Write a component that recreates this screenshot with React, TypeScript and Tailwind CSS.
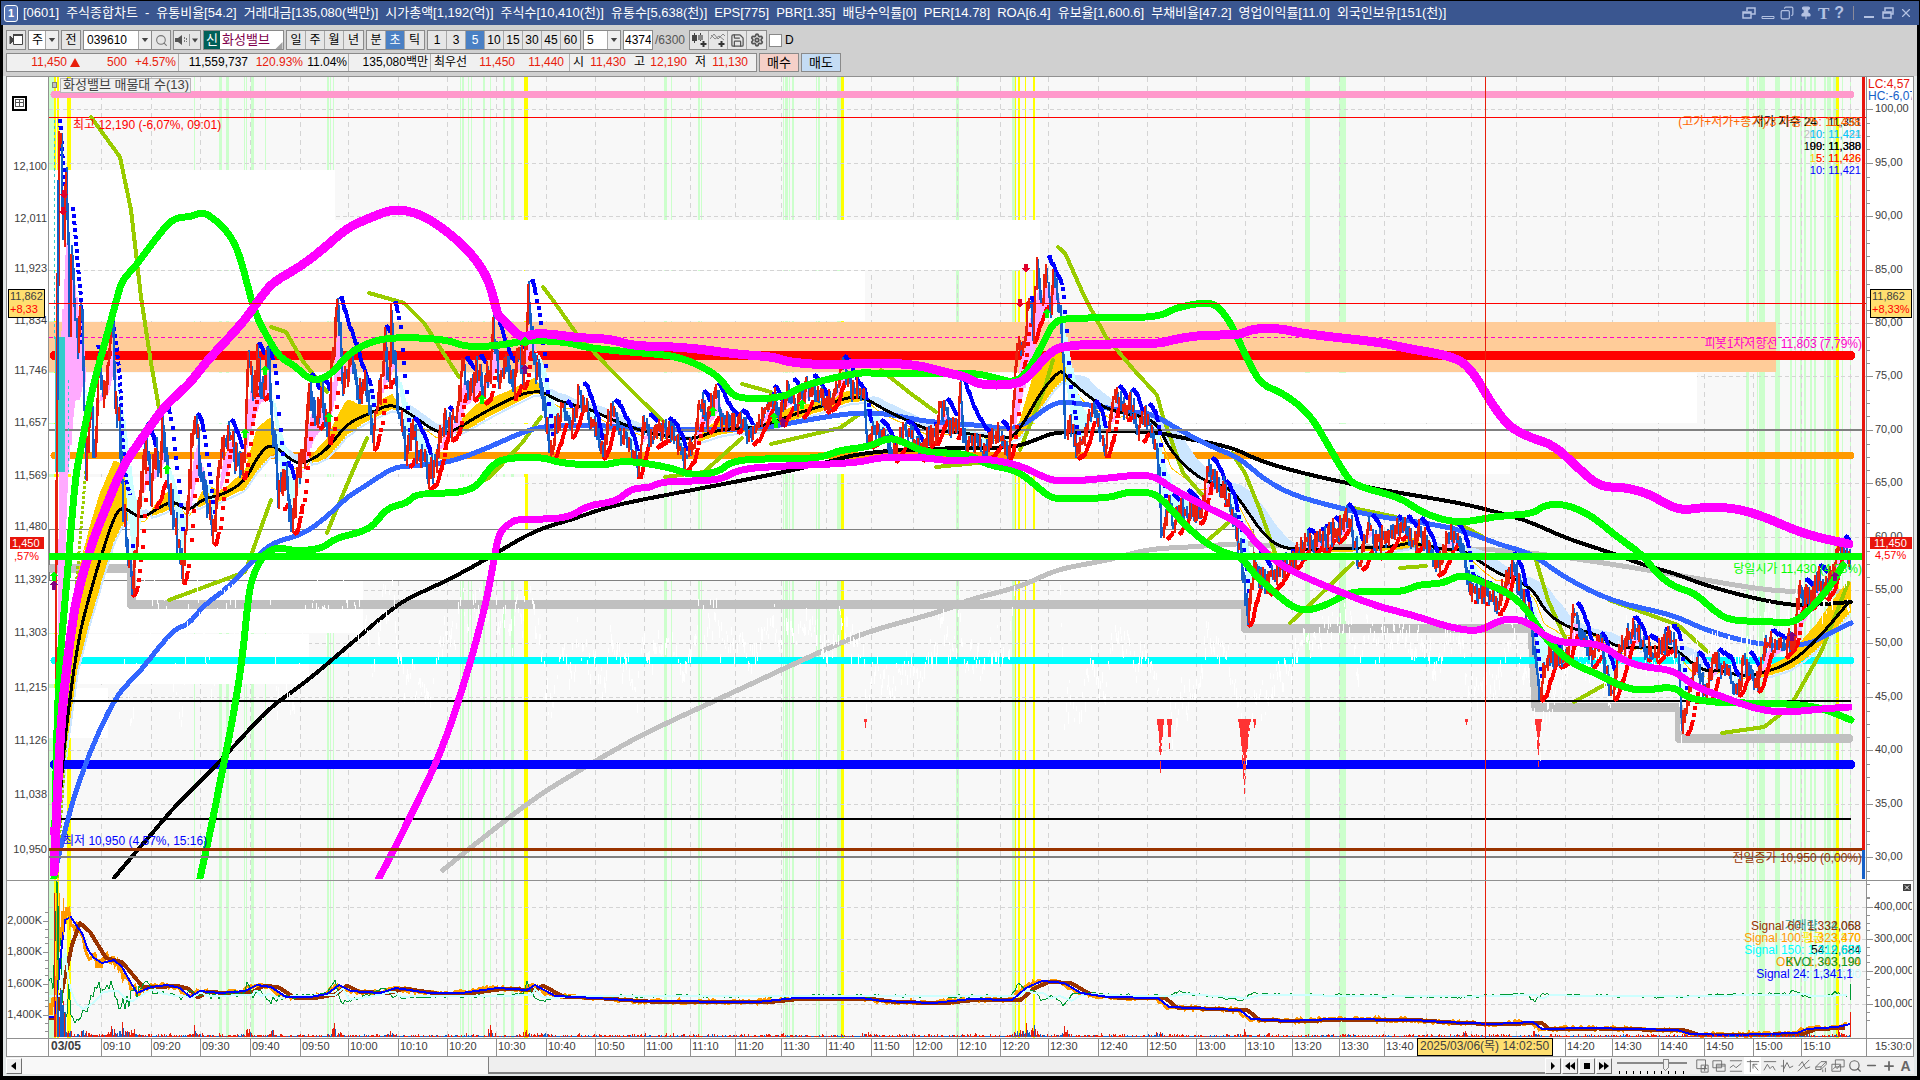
import React from "react";
import { Search, Save, Settings, Pin, Minus, Plus, X, Copy } from "lucide-react";

type Pt = [number, number];

const FONT = "font-['Liberation_Sans','Noto_Sans_CJK_KR',sans-serif]";

const parse = (s: string): Pt[] => s.trim().split(/\s+/).map((p) => p.split(",").map(Number) as Pt);

const toPath = (pts: Pt[]) => pts.map((p, i) => `${i ? "L" : "M"}${p[0]} ${Math.round(p[1] * 10) / 10}`).join("");

const smooth = (pts: Pt[]) => {
  let d = `M${pts[0][0]} ${pts[0][1]}`;
  for (let i = 1; i < pts.length - 1; i++) {
    d += `Q${pts[i][0]} ${pts[i][1]} ${(pts[i][0] + pts[i + 1][0]) / 2} ${(pts[i][1] + pts[i + 1][1]) / 2}`;
  }
  const l = pts[pts.length - 1];
  return d + `L${l[0]} ${l[1]}`;
};

const at = (pts: Pt[], x: number) => {
  if (x <= pts[0][0]) return pts[0][1];
  for (let i = 1; i < pts.length; i++) {
    if (x <= pts[i][0]) {
      const [x0, y0] = pts[i - 1];
      const [x1, y1] = pts[i];
      return y0 + ((y1 - y0) * (x - x0)) / (x1 - x0 || 1);
    }
  }
  return pts[pts.length - 1][1];
};

const random = (seed: number) => () => {
  seed = (seed * 1664525 + 1013904223) % 4294967296;
  return seed / 4294967296;
};

const bandUpper = parse(`54,872 56,830 57,800 60,740 64,690 70,640 76,600 84,570 93,540 105,510 122,467 143,437 163,408 180,392 190,383 206,362 224,343 245,320 261,297 273,282 300,267 322,250 347,228 367,219 390,210 404,210 422,215 441,227 461,243 478,262 490,283 498,317 502,318 514,332 524,338 535,333 559,335 580,338 612,339 632,346 685,347 734,354 775,357 787,362 824,365 842,365 857,363 885,363 918,365 947,373 967,377 979,385 1014,385 1028,378 1045,357 1063,344 1159,344 1171,340 1200,335 1240,335 1249,330 1266,328 1283,329 1305,334 1379,342 1405,348 1457,357 1474,373 1491,403 1509,427 1531,438 1554,445 1578,468 1600,487 1622,487 1648,493 1678,511 1704,507 1734,508 1760,515 1799,532 1825,539 1849,544`);
const bandLower = parse(`379,878 394,850 412,813 433,770 449,730 461,693 473,653 486,603 494,560 499,532 510,523 518,519 567,519 588,505 616,502 632,488 649,488 663,481 720,481 738,469 783,466 857,463 881,457 922,457 955,462 983,458 1020,465 1045,478 1061,482 1110,478 1134,475 1155,476 1171,488 1208,508 1228,517 1245,528 1257,545 1283,567 1318,583 1348,595 1379,607 1413,615 1448,627 1478,632 1496,622 1511,618 1530,623 1543,635 1561,643 1600,643 1622,660 1643,667 1674,670 1695,687 1726,698 1752,708 1782,713 1821,709 1849,707`);
const greenUpper = parse(`54,878 56,760 59,667 67,580 75,480 80,453 92,390 102,353 116,302 122,280 135,267 151,245 169,222 180,217 190,217 202,212 212,217 229,233 239,253 247,283 255,313 267,337 280,358 294,365 312,382 331,375 347,355 367,343 392,337 445,339 465,347 498,346 527,340 567,342 588,348 640,353 669,355 693,362 720,377 730,393 742,399 783,398 800,387 824,380 861,372 881,374 934,374 975,373 996,378 1014,383 1028,372 1045,340 1053,323 1065,318 1110,318 1159,317 1175,308 1200,303 1214,303 1228,318 1240,343 1251,367 1262,385 1283,393 1309,413 1327,443 1344,473 1355,486 1400,497 1422,513 1457,524 1496,516 1533,514 1544,505 1565,504 1591,515 1617,537 1643,555 1656,573 1674,587 1695,593 1713,610 1730,621 1765,621 1791,624 1808,612 1830,587 1843,565`);
const greenLower = parse(`200,878 208,843 222,773 235,707 243,653 249,590 255,570 265,553 278,547 294,551 322,549 335,538 371,530 386,508 408,503 416,493 473,493 490,467 504,458 543,457 559,463 602,466 625,460 673,468 689,475 718,473 734,459 796,459 824,457 840,450 869,447 889,437 906,443 926,453 967,453 987,465 1016,470 1032,482 1049,497 1061,499 1110,498 1126,492 1151,492 1163,500 1183,523 1204,542 1224,553 1242,557 1253,573 1275,593 1292,607 1307,611 1327,605 1353,590 1400,593 1420,584 1442,584 1461,574 1483,582 1513,595 1531,615 1544,637 1570,663 1600,675 1622,687 1643,691 1674,686 1687,698 1717,703 1773,703 1817,706 1851,720`);
const blackLong = parse(`114,878 135,853 155,830 176,805 204,778 237,743 269,708 306,682 347,647 388,612 408,598 449,580 490,557 535,530 571,520 604,508 640,500 698,489 775,474 824,463 865,452 947,448 1012,448 1036,440 1057,431 1151,431 1183,438 1232,447 1257,460 1301,473 1370,488 1413,495 1465,504 1500,513 1531,522 1565,538 1609,552 1643,565 1674,573 1704,585 1752,598 1795,606 1825,604 1851,602`);
const blueMa = parse(`57,863 69,813 82,773 98,733 118,693 139,673 159,647 176,628 188,625 204,605 229,587 253,560 273,542 302,535 327,517 347,497 367,485 392,468 408,466 449,463 490,447 527,430 555,425 600,425 640,430 681,430 759,429 796,422 849,413 885,413 926,422 979,425 1012,430 1028,422 1053,403 1069,402 1102,407 1130,412 1151,413 1179,430 1212,447 1240,458 1262,478 1292,495 1335,507 1379,517 1426,523 1465,531 1500,545 1531,553 1565,578 1613,602 1674,615 1700,628 1739,640 1773,646 1808,645 1830,633 1851,623`);
const grayLong = parse(`443,870 490,832 539,795 580,770 630,741 673,720 734,692 796,663 840,643 873,630 947,610 967,600 1020,587 1049,573 1069,567 1110,560 1147,549 1191,547 1245,543 1266,546 1474,548 1544,554 1630,567 1700,579 1752,588 1791,592 1849,591`);
const midMa = parse(`56,868 61,780 67,720 78,640 90,593 102,553 114,517 122,506 135,515 143,518 155,510 173,500 188,512 204,498 220,496 245,482 257,457 271,442 294,463 306,463 327,450 347,423 371,413 392,403 412,415 437,433 453,432 482,413 535,387 559,402 588,408 612,420 644,432 691,441 718,429 759,428 791,415 832,403 849,397 865,398 885,410 906,420 930,431 967,433 1008,440 1020,430 1040,393 1057,373 1063,371 1069,380 1089,397 1110,411 1147,417 1159,427 1171,452 1200,480 1228,487 1240,500 1262,533 1279,547 1301,550 1392,547 1413,542 1444,550 1461,548 1496,573 1518,580 1535,592 1544,610 1565,627 1600,635 1617,648 1648,647 1674,647 1691,663 1708,672 1721,670 1739,676 1760,674 1791,663 1817,640 1849,602`);
const olive = [
  `91,117 120,157 131,210 141,297 151,363 159,408`, `169,600 245,572 271,500`, `271,327 286,332 302,360 327,392`,
  `327,533 335,513 349,480 367,438`, `369,293 404,303 424,323 459,377`, `465,490 490,477 522,443 541,417`,
  `543,287 555,303 576,333 608,367 640,399 665,423`, `665,477 704,472 742,438`, `742,384 771,392`,
  `771,444 840,428 861,413`, `881,370 910,393 936,412`, `936,467 987,462`, `1020,450 1045,387 1053,360`,
  `1058,247 1065,253 1085,298 1106,337 1134,370 1157,395 1163,417 1183,473 1204,497`, `1208,540 1228,523`,
  `1232,453 1245,473 1260,510 1275,553`, `1290,623 1318,597 1353,563`, `1353,508 1396,517`, `1400,568 1426,566`,
  `1426,513 1465,527 1483,537`, `1535,557 1548,600 1565,638`, `1574,702 1604,685`, `1609,600 1678,625 1708,652`,
  `1722,733 1764,727 1790,707 1822,650 1848,583`,
].map((s) => toPath(parse(s)));

const priceKeys = parse(`54,860 55,620 57,150 60,135 62,250 64,175 67,215 68,360 70,240 73,300 77,350 80,300 83,420 85,470 90,395 94,465 98,355 102,405 106,375 111,320 114,400 118,430 122,500 126,550 131,592 135,540 140,480 146,440 150,500 155,440 158,480 161,415 166,475 172,515 177,540 181,575 186,510 190,445 195,425 200,475 206,500 212,530 216,480 222,450 228,435 235,460 242,465 247,350 252,400 256,355 262,405 266,345 272,440 278,495 284,470 291,525 298,470 304,455 308,380 315,425 320,395 327,425 332,345 336,305 342,385 350,355 357,395 364,380 372,435 380,380 384,340 388,385 390,315 396,400 405,455 412,430 418,460 424,455 428,478 434,460 445,415 452,428 462,368 470,395 475,365 482,390 490,365 492,325 498,388 505,355 512,385 518,352 522,370 527,295 532,350 540,390 548,448 558,420 562,405 570,428 577,395 585,410 594,430 602,450 610,408 618,430 627,442 638,470 642,422 650,438 660,430 672,432 682,460 692,445 700,398 705,420 715,392 720,422 730,420 740,420 749,438 758,425 765,402 774,400 778,418 786,388 795,408 805,388 815,395 830,400 838,378 842,362 850,390 862,392 865,420 866,452 872,425 880,430 892,455 900,432 908,435 920,448 930,432 937,430 938,400 948,425 956,425 959,385 963,448 975,442 983,448 995,432 1008,450 1012,400 1016,345 1022,352 1028,295 1032,330 1036,252 1040,305 1045,270 1050,310 1052,275 1058,308 1062,360 1064,438 1070,425 1075,450 1085,430 1092,403 1104,450 1113,390 1122,410 1130,400 1136,430 1144,412 1152,438 1158,470 1160,535 1168,505 1172,522 1180,502 1188,515 1200,515 1206,465 1218,485 1228,500 1232,510 1240,560 1247,622 1253,565 1264,585 1275,573 1288,562 1301,548 1311,542 1331,535 1348,518 1357,562 1368,525 1374,543 1390,535 1405,524 1413,545 1420,532 1435,568 1448,533 1461,547 1468,590 1483,593 1496,606 1511,565 1522,600 1530,620 1535,667 1539,697 1544,660 1561,655 1567,658 1572,605 1583,643 1591,655 1598,635 1611,698 1617,650 1632,626 1643,645 1656,655 1667,635 1676,647 1681,728 1689,687 1695,655 1704,698 1713,658 1726,673 1737,688 1743,665 1756,682 1765,640 1778,650 1793,637 1797,595 1812,593 1817,575 1823,595 1834,563 1838,540 1845,547 1849,567`);

interface Candle { x: number; c: number; hi: number; lo: number; up: boolean }

const candles: Candle[] = (() => {
  const r = random(11);
  const out: Candle[] = [];
  let prev = 860;
  for (let x = 54; x <= 1850; x += 1.2) {
    const wild = x < 330 ? 16 : x < 560 ? 14 : x > 1160 ? 11 : 10;
    const c = at(priceKeys, x) + (r() - 0.5) * wild * 1.3;
    out.push({ x: Math.round(x) + 0.5, c, hi: Math.min(c, prev) - r() * wild * 0.8, lo: Math.max(c, prev) + r() * wild * 0.8, up: c < prev });
    prev = c;
  }
  return out;
})();

const bars = (up: boolean) => candles.filter((k) => k.up === up).map((k) => `M${k.x} ${k.hi.toFixed(0)}V${k.lo.toFixed(0)}`).join("");

const sar = (() => {
  let falling = false;
  let s = 860;
  let ep = 860;
  let af = 0.03;
  let above = "";
  let below = "";
  let last = s;
  candles.forEach((k) => {
    s += af * (ep - s);
    let flip = false;
    if (falling) {
      if (k.lo > ep) { ep = k.lo; af = Math.min(0.24, af + 0.02); }
      if (k.hi < s) { falling = false; s = ep; ep = k.hi; af = 0.03; flip = true; }
    } else {
      if (k.hi < ep) { ep = k.hi; af = Math.min(0.24, af + 0.02); }
      if (k.lo > s) { falling = true; s = ep; ep = k.lo; af = 0.03; flip = true; }
    }
    const near = !flip && Math.abs(s - last) < 6;
    const dot = near ? `M${k.x - 1} ${last.toFixed(0)}L${k.x} ${s.toFixed(0)}` : `M${k.x} ${s.toFixed(0)}h0.1`;
    last = s;
    if (k.x < 132) return;
    if (falling) above += dot; else below += dot;
  });
  return { above, below };
})();

const openingTrails = [`60,119 63,163 66,190`, `73,207 75,230 78,267 81,297 82,347`, `98,345 101,358`, `112,313 116,343 120,377 122,433 126,480 130,495`].map((s) => toPath(parse(s)));

const ribbon = (() => {
  let f = candles[0].c;
  let s = candles[0].c;
  let up = "";
  let down = "";
  candles.forEach((k) => {
    f += (k.c - f) * 0.24;
    s += (k.c - s) * 0.08;
    const seg = `M${k.x} ${f.toFixed(0)}V${s.toFixed(0)}`;
    if (f < s) up += seg; else down += seg;
  });
  return { up, down };
})();

const cloud = (() => {
  let gold = "";
  let blue = "";
  const edge: Pt[] = [];
  const pale: Pt[] = [];
  for (let x = 60; x <= 1850; x += 2) {
    const m = at(midMa, x);
    const avg = (at(midMa, x - 24) + at(midMa, x - 12)) / 2;
    const d = Math.max(x < 130 ? -66 : -48, Math.min(x < 1000 ? 8 : 30, m - avg));
    if (d < 0) {
      gold += `M${x} ${(m + d).toFixed(0)}V${(m - d * 0.4 + 3).toFixed(0)}`;
      pale.push([x, m - d * 0.4 + 5]);
      edge.push([x, m + d]);
    } else {
      blue += `M${x} ${(m - d).toFixed(0)}V${m.toFixed(0)}`;
      edge.push([x, m + d * 0.5 + 1]);
      pale.push([x, m - d]);
    }
  }
  return { gold, blue, edge: toPath(edge), pale: toPath(pale) };
})();

const ghost = (() => {
  const r = random(5);
  let d = "";
  candles.forEach((k) => {
    if (k.x < 95 || r() < 0.1) return;
    const y = 646 + (k.c - at(midMa, k.x)) * 1.1 + (r() - 0.5) * 26;
    if (y > 578 && y < 754) d += `M${k.x} ${y.toFixed(0)}v${(3 + r() * 10).toFixed(0)}`;
  });
  return d;
})();

const drips = (() => {
  const r = random(9);
  let d = "";
  const cone = (cx: number, w: number, depth: number) => {
    for (let x = -w; x <= w; x++) {
      const h = depth * Math.pow(1 - Math.abs(x) / (w + 1), 1.7);
      for (let y = 719; y < 719 + h; y += 3) if (y < 719 + h * 0.6 || r() > 0.3) d += `M${cx + x + 0.5} ${y}v3`;
    }
  };
  cone(1160, 3, 54); cone(1169, 2, 30); cone(1244, 6, 76); cone(1254, 1, 14); cone(1538, 3, 48); cone(865, 1, 8); cone(1466, 1, 4);
  return d;
})();

const obv = parse(`49,1017 55,1017 61,953 65,920 71,917 76,925 82,933 88,950 94,958 102,963 114,960 122,967 131,983 137,993 151,987 167,985 180,988 190,997 200,991 220,993 245,991 257,985 271,987 286,997 310,997 327,994 339,985 351,991 380,993 396,988 429,993 461,993 498,988 527,990 535,985 555,996 596,998 640,1001 757,1002 796,998 861,998 883,1001 933,1003 971,999 1012,1000 1026,988 1042,981 1064,983 1081,993 1108,997 1158,998 1169,1007 1240,1010 1251,1019 1289,1021 1333,1019 1415,1020 1443,1022 1493,1024 1533,1022 1542,1029 1590,1028 1677,1030 1690,1034 1733,1035 1797,1033 1807,1029 1837,1027 1850,1024`);
const obvSlow: Pt[] = [...parse(`49,1018 56,1018 60,1000 65,977 72,945 80,923 90,932 106,958 122,962 143,987`), ...obv.filter((p) => p[0] > 145 && p[0] < 1838).map(([x, y]): Pt => [x + 8, y + 0.5])];
const kvo = parse(`49,996 53,996 57,900 60,960 63,985 68,1010 75,1022 82,1014 88,1005 95,988 110,985 117,1000 124,1007 131,998 139,988 147,982 152,990 165,995 185,998 193,989 200,997 245,993 248,982 252,996 262,992 272,1001 285,996 327,994 335,980 341,1003 360,998 386,987 392,997 490,996 524,994 527,982 534,998 545,1001 556,997 640,996 1012,996 1018,984 1026,990 1036,990 1041,1001 1052,996 1064,1006 1072,995 1082,992 1110,995 1155,995 1162,997 1170,994 1180,992 1200,995 1240,1000 1246,997 1252,994 1390,996 1463,997 1528,994 1534,1002 1542,994 1560,995 1680,997 1720,995 1785,994 1796,991 1803,996 1820,997 1835,993 1848,997`);
const osc = (() => {
  const r = random(21);
  const green: Pt[] = [];
  const pale: Pt[] = [];
  const orange: Pt[] = [];
  for (let x = 49; x < 1849; x += 2) {
    const a = x < 70 ? 60 : x < 140 ? 16 : x < 300 ? 7 : 3;
    green.push([x, at(kvo, x) + (r() - 0.5) * a]);
    pale.push([x, x < 56 ? 996 : at(kvo, x - 8) * 0.5 + 498]);
    orange.push([x, at(obv, x + 3) + (r() - 0.5) * (x < 70 ? 44 : x < 140 ? 14 : 4)]);
  }
  return { green: toPath(green), pale: toPath(pale), orange: toPath(orange) };
})();

const volume = (() => {
  const r = random(31);
  const peaks = [[56, 120], [64, 45], [84, 14], [112, 15], [122, 18], [132, 12], [194, 11], [247, 13], [272, 8], [334, 14], [388, 10], [490, 11], [525, 12], [544, 8], [783, 5], [865, 6], [1018, 13], [1026, 12], [1034, 18], [1064, 10], [1158, 9], [1244, 6], [1348, 4], [1464, 5], [1534, 7], [1797, 3], [1838, 7]];
  let red = "";
  let blue = "";
  for (let x = 54; x < 1850; x += 1) {
    const h = 1 + Math.round(r() * r() * 3 + peaks.reduce((s, [px, ph]) => s + ph * r() * Math.exp(-Math.abs(x - px) / 3), 0));
    if (r() > 0.45) red += `M${x + 0.5} 1037v-${h}`; else blue += `M${x + 0.5} 1037v-${Math.max(1, Math.round(h * 0.7))}`;
  }
  return { red: red + "M1850.5 1037v-25", blue };
})();

const greenBands = [[49, 5], [194, 1], [219, 3], [226, 3], [244, 1], [246, 1], [251, 3], [265, 1], [327, 2], [330, 1], [333, 1], [460, 1], [462, 2], [468, 1], [471, 1], [483, 2], [490, 1], [503, 2], [511, 3], [664, 3], [671, 1], [698, 2], [701, 1], [783, 1], [785, 3], [789, 1], [792, 2], [816, 1], [818, 2], [837, 4], [956, 3], [1012, 3], [1305, 5], [1339, 7], [1746, 3], [1757, 1], [1759, 6], [1775, 5], [1790, 2], [1795, 1], [1800, 2], [1804, 2], [1810, 2], [1814, 2], [1824, 2], [1827, 4], [1833, 3], [1842, 1], [1850, 1]];
const yellowBands = [[54, 2], [57, 2], [67, 4], [524, 3], [527, 1], [841, 3], [1015, 1], [1018, 2], [1025, 1], [1033, 2], [1836, 3]];
const profile = [[170, 335], [220, 1040], [271, 865], [373, 1697], [424, 1510], [477, 525], [581, 363], [634, 309], [688, 108]];
const gridX = [101, 151, 200, 250, 300, 348, 398, 447, 496, 546, 595, 644, 690, 735, 781, 826, 871, 913, 957, 1000, 1048, 1098, 1147, 1196, 1245, 1292, 1339, 1384, 1426, 1471, 1516, 1565, 1612, 1658, 1704, 1753, 1801];
const gridY = [109, 163, 216, 270, 323, 376, 430, 483, 537, 590, 643, 697, 750, 804, 857];
const leftLabels: [string, number][] = [["12,100", 166], ["12,011", 218], ["11,923", 268], ["11,834", 320], ["11,746", 370], ["11,657", 422], ["11,569", 475], ["11,480", 526], ["11,392", 579], ["11,303", 632], ["11,215", 687], ["11,126", 740], ["11,038", 794], ["10,950", 849], ["2,000K", 920], ["1,800K", 951], ["1,600K", 983], ["1,400K", 1014]];
const subGrid: [string, number][] = [["400,000", 907], ["300,000", 939], ["200,000", 971], ["100,000", 1004]];
const greenArrows = [[265, 370], [329, 417], [245, 433], [167, 469], [482, 399], [525, 341], [713, 411], [774, 417], [776, 423], [802, 404], [1047, 313], [54, 576]];
const purpleArrows = [[525, 369], [783, 422], [54, 585], [1835, 576], [1792, 636]];
const redArrows = [[64, 194], [63, 211], [1026, 268], [1020, 303]];

function T({ x, y, c = "#404040", end, size = 11, bold, children }: { x: number; y: number; c?: string; end?: boolean; size?: number; bold?: boolean; children: React.ReactNode }) {
  return (
    <text x={x} y={y + 4} fill={c} fontSize={size} fontWeight={bold ? 700 : 400} textAnchor={end ? "end" : "start"}>
      {children}
    </text>
  );
}

function Rail({ y, c, w, from = 54, to = 1851, round }: { y: number; c: string; w: number; from?: number; to?: number; round?: boolean }) {
  return <path d={`M${from} ${y}H${to}`} stroke={c} strokeWidth={w} strokeLinecap={round ? "round" : "butt"} fill="none" />;
}

function Curve({ pts, c, w }: { pts: Pt[]; c: string; w: number }) {
  return <path d={smooth(pts)} stroke={c} strokeWidth={w} fill="none" strokeLinecap="round" strokeLinejoin="round" />;
}

function Chart() {
  return (
    <svg viewBox="6 76 1908 981" className={`block h-auto w-full bg-white ${FONT}`} shapeRendering="crispEdges" role="img" aria-label="화성밸브 차트">
      <defs>
        <clipPath id="plot"><rect x="49" y="78" width="1817" height="801" /></clipPath>
        <clipPath id="sub"><rect x="49" y="881" width="1817" height="157" /></clipPath>
        <clipPath id="right"><rect x="1867" y="77" width="45" height="980" /></clipPath>
      </defs>
      <rect x="49" y="77" width="1817" height="961" fill="#f8f8f8" />
      {greenBands.map(([x, w]) => <rect key={x} x={x} y={77} width={w} height={961} fill="#ccffcc" />)}
      {yellowBands.map(([x, w]) => <rect key={x} x={x} y={77} width={w} height={961} fill="#ffff00" />)}
      <g stroke="#d4d4d4" strokeDasharray="5 4">
        {gridX.map((x) => <path key={x} d={`M${x + 0.5} 77V1038`} />)}
        {gridY.map((y) => <path key={y} d={`M49 ${y + 0.5}H1866`} strokeDasharray="4 3" />)}
        {subGrid.map(([, y]) => <path key={y} d={`M49 ${y + 0.5}H1866`} strokeDasharray="4 3" />)}
        <path d="M1850.5 77V1038" />
      </g>

      <g clipPath="url(#plot)" fill="none">
        {profile.map(([y, to]) => <rect key={y} x={49} y={y} width={to - 49} height={y === 477 || y === 581 ? 52 : 50} fill="#fff" />)}
        <rect x="49.5" y="529.5" width="1204" height="51" fill="#fff" stroke="#808080" />
        <rect x="49" y="322" width="1727" height="50" fill="#ffcc99" />
        <Rail y={94.5} c="#ff99cc" w={7} round />
        <Rail y={117.5} c="#ff0000" w={1} from={49} to={1866} />
        <path d="M49 337.5H1862" stroke="#ff00cc" strokeDasharray="4 3" />
        <path d="M52 568.5H131V604.5H1245V628.5H1532L1536 707.5H1679V738.5H1849" stroke="#c0c0c0" strokeWidth="9" strokeLinejoin="round" strokeLinecap="round" />
        <Rail y={355.5} c="#ff0000" w={9} round />
        <Rail y={455.5} c="#ff9900" w={7} round />
        <Rail y={660.5} c="#00ffff" w={7} round />
        <Curve pts={grayLong} c="#c0c0c0" w={5} />
        <path d="M60 560L64 480L68 360L72 320L78 330L84 380L80 400L74 400L68 470L64 600Z" fill="#ffaaff" />
        <path d={cloud.blue} stroke="#cce6ff" strokeWidth="2" />
        <path d={cloud.gold} stroke="#ffcc00" strokeWidth="2" />
        <path d={cloud.edge} stroke="#ffcc00" strokeWidth="1" />
        <path d={cloud.pale} stroke="#cce6ff" strokeWidth="2" />
        <path d={ribbon.up} stroke="#ffaaff" strokeWidth="2" />
        <path d={ribbon.down} stroke="#ccffff" strokeWidth="2" />
        {olive.map((d) => <path key={d} d={d} stroke="#99cc00" strokeWidth="4" strokeLinecap="round" strokeLinejoin="round" />)}
        <path d="M57 878L62 800L72 640L80 540L85 480L89 440" stroke="#99cc00" strokeWidth="3" strokeDasharray="3 2" />
        <Rail y={764.5} c="#0000ff" w={9} round />
        <Rail y={819} c="#000" w={2} />
        <Curve pts={blackLong} c="#000" w={4} />
        <Curve pts={blueMa} c="#3366ff" w={5} />
        <path d={ghost} stroke="#fff" />
        <Rail y={701} c="#000" w={2} />
        <path d={drips} stroke="#ff3333" />
        <Rail y={430} c="#808080" w={2} from={49} to={1862} />
        <Curve pts={midMa} c="#000" w={3} />
        <rect x="55" y="337" width="10" height="135" fill="#33cccc" />
        <path d="M54.5 120V340M68.5 380V472" stroke="#33cccc" strokeDasharray="3 3" />
        <path d={sar.below} stroke="#ff0000" strokeWidth="4" strokeLinecap="square" />
        <path d={sar.above} stroke="#0000ff" strokeWidth="4" strokeLinecap="square" />
        {openingTrails.map((d) => <path key={d} d={d} stroke="#0000ff" strokeWidth="4" strokeDasharray="4 3" />)}
        <path d={bars(false)} stroke="#1560c8" strokeWidth="2" />
        <path d={bars(true)} stroke="#e8200c" strokeWidth="2" />
        <path d="M55.5 480V878" stroke="#e8200c" strokeWidth="2" />
        <path d="M57.5 180V400" stroke="#1560c8" strokeWidth="2" />
        <Curve pts={greenUpper} c="#00ff00" w={7} />
        <Curve pts={greenLower} c="#00ff00" w={7} />
        <Curve pts={bandUpper} c="#ff00ff" w={9} />
        <Curve pts={bandLower} c="#ff00ff" w={7} />
        <Rail y={556.5} c="#00ff00" w={7} from={49} to={1862} />
        <Rail y={849.5} c="#993300" w={3} from={49} to={1862} />
        <Rail y={857} c="#808080" w={2} from={49} to={1862} />
        <rect x="50" y="827" width="6" height="8" fill="#ff00ff" />
        <rect x="50" y="868" width="6" height="8" fill="#ff00ff" />
        {greenArrows.map(([x, y]) => <path key={`${x}-${y}`} d={`M${x} ${y - 5}l4 5h-2v5h-4v-5h-2z`} fill="#00ff00" />)}
        {purpleArrows.map(([x, y]) => <path key={`${x}-${y}`} d={`M${x} ${y - 5}l4 5h-2v5h-4v-5h-2z`} fill="#800080" />)}
        {redArrows.map(([x, y]) => <path key={`${x}-${y}`} d={`M${x} ${y + 5}l4 -5h-2v-4h-4v4h-2z`} fill="#e0002a" />)}
        <path d="M49 303.5H1866" stroke="#ff0000" />
      </g>

      <g clipPath="url(#sub)" fill="none">
        <path d={osc.orange} stroke="#ff9900" strokeWidth="3" />
        <path d={toPath(obvSlow)} stroke="#993300" strokeWidth="4" strokeLinejoin="round" />
        <path d={osc.green} stroke="#009933" />
        <path d={osc.pale} stroke="#ccffff" strokeWidth="2" />
        <path d={toPath(obv)} stroke="#0000ff" strokeWidth="2" />
        <path d={volume.red} stroke="#e8200c" />
        <path d={volume.blue} stroke="#1560c8" />
        <path d="M56.5 893V1037M59.5 893V940M63.5 898V935M69.5 906V930" stroke="#ff9900" />
        <path d="M54.5 893V1037" stroke="#e8200c" />
        <path d="M57.5 893V960M58.5 910V990" stroke="#009933" />
        <path d="M60.5 990V1037M62.5 1005V1037M57.5 1010V1037" stroke="#1560c8" strokeWidth="2" />
        <path d="M1850.5 984V1000" stroke="#009933" />
      </g>

      <path d="M1485.5 77V1038" stroke="#e8200c" />
      <g stroke="#909090" fill="none">
        <path d="M6.5 77V1057M6 76.5H1914M1913.5 77V1057M48.5 77V1056M1866.5 77V1056" />
        <path d="M6 880.5H1913M6 1038.5H1913M6 1056.5H1913" />
        {gridX.map((x) => <path key={x} d={`M${x + 0.5} 1039V1056`} />)}
        {gridY.map((y) => <path key={y} d={`M1867 ${y + 0.5}h6M1867 ${y + 14.5}h3M1867 ${y + 27.5}h3M1867 ${y + 40.5}h3`} />)}
        {subGrid.map(([, y]) => <path key={y} d={`M1867 ${y + 0.5}h6M1867 ${y - 8.5}h3M1867 ${y + 8.5}h3M1867 ${y + 16.5}h3`} />)}
        {leftLabels.slice(14).map(([, y]) => <path key={y} d={`M48 ${y + 1.5}h-5M48 ${y - 7.5}h-3M48 ${y + 9.5}h-3M48 ${y + 17.5}h-3`} />)}
      </g>
      <rect x="1862" y="77" width="3" height="773" fill="#e8150c" />
      <rect x="1862" y="850" width="3" height="29" fill="#1560c8" />

      {leftLabels.map(([t, y]) => <T key={t} x={t.endsWith("K") ? 42 : 47} y={y} end>{t}</T>)}
      <g clipPath="url(#right)">
        {gridY.map((y, i) => <T key={y} x={1875} y={y - 1}>{`${100 - i * 5},00`}</T>)}
        {subGrid.map(([t, y]) => <T key={t} x={1874} y={y - 1}>{t}</T>)}
        <T x={1868} y={84} c="#e8150c" size={12}>LC:4,57</T>
        <T x={1868} y={96} c="#1560c8" size={12}>HC:-6,07</T>
        <T x={1875} y={1046}>15:30:00</T>
      </g>
      <T x={51} y={1046} size={12} bold>03/05</T>
      {gridX.map((x, i) => {
        const m = 10 + i * 10;
        const label = `${String(9 + Math.floor(m / 60)).padStart(2, "0")}:${String(m % 60).padStart(2, "0")}`;
        return x > 1420 && x < 1560 ? null : <T key={x} x={x + 2} y={1046}>{label}</T>;
      })}
      <rect x="1417.5" y="1038.5" width="135" height="17" fill="#ffdf70" stroke="#000" />
      <T x={1420} y={1046} size={12}>2025/03/06(목) 14:02:50</T>

      <rect x="60.5" y="78.5" width="130" height="14" fill="#f0f0f0" stroke="#b8b8b8" />
      <rect x="52.5" y="82.5" width="4" height="5" fill="#c0c0c0" stroke="#808080" />
      <T x={63} y={85} size={13}>화성밸브 매물대 수(13)</T>
      <T x={73} y={125} c="#ff0000" size={12}>최고 12,190 (-6,07%, 09:01)</T>
      <T x={63} y={841} c="#0000ff" size={12}>최저 10,950 (4,57%, 15:16)</T>
      <T x={1862} y={344} c="#ff00cc" size={12} end>피봇1차저항선 11,803 (7,79%)</T>
      <T x={1862} y={569} c="#00ff00" size={12} end>당일시가 11,430 (4,38%)</T>
      <T x={1862} y={858} c="#993300" size={12} end>전일종가 10,950 (0,00%)</T>

      <T x={1817} y={122} c="#000" size={12} end>저가 지수 24</T>
      <T x={1861} y={122} c="#000" end>11,351</T>
      <T x={1861} y={122} c="#ff6600" size={12} end>(고가+저가+종가)/3 가중 25: 11,438</T>
      <T x={1861} y={134} c="#c0c0c0" end>200: 11,434</T>
      <T x={1861} y={134} c="#00ccff" end>10: 11,421</T>
      <T x={1861} y={146} c="#000" end>100: 11,380</T>
      <T x={1861} y={146} c="#000" end>99: 11,388</T>
      <T x={1861} y={158} c="#ffcc00" end>15: 11,436</T>
      <T x={1861} y={158} c="#ff0000" end>5: 11,426</T>
      <T x={1861} y={170} c="#0000ff" end>10: 11,421</T>

      <T x={1861} y={926} c="#339999" size={12} end>거래량: 34,058</T>
      <T x={1861} y={926} c="#993300" size={12} end>Signal 60: 1,332,068</T>
      <T x={1861} y={938} c="#ffee00" size={12} end>평균: 3,370</T>
      <T x={1861} y={938} c="#ff9900" size={12} end>Signal 100: 1,323,470</T>
      <T x={1861} y={950} c="#000" size={12} end>54: 2,684</T>
      <T x={1861} y={950} c="#00ffff" size={12} end>Signal 150: 1,319,650</T>
      <T x={1861} y={962} c="#ff9900" size={12} end>OBV: 1,343,194</T>
      <T x={1861} y={962} c="#009933" size={12} end>KVO: 303,190</T>
      <T x={1861} y={974} c="#ccffff" size={12} end>Signal: 6,090</T>
      <T x={1853} y={974} c="#0000ff" size={12} end>Signal 24: 1,341,1</T>

      {[8, 1870].map((x) => (
        <g key={x}>
          <rect x={x + 0.5} y="289.5" width={x === 8 ? 36 : 41} height="28" fill="#ffdf70" stroke="#000" />
          <T x={x + 2} y={296}>11,862</T>
          <T x={x + 2} y={309} c="#ff0000">{x === 8 ? "+8,33" : "+8,33%"}</T>
        </g>
      ))}
      <rect x="10" y="537" width="34" height="12" fill="#e8150c" />
      <T x={12} y={543} c="#fff">1,450</T>
      <T x={14} y={556} c="#ff0000">,57%</T>
      <rect x="1870" y="537" width="42" height="12" fill="#e8150c" />
      <T x={1874} y={543} c="#fff">11,450</T>
      <T x={1875} y={555} c="#ff0000">4,57%</T>
      <g fill="none" stroke="#000">
        <rect x="12.5" y="96.5" width="13" height="13" fill="#fff" strokeWidth="2" />
        <path d="M15 99.5H24M15 102.5H24M15 106.5H24M15.5 99V107M19.5 99V107M23.5 99V107" stroke="#555" />
      </g>
      <rect x="1903" y="884" width="8" height="7" fill="#404040" />
      <path d="M1905 885.5l4 4M1909 885.5l-4 4" stroke="#fff" shapeRendering="auto" />
    </svg>
  );
}

const cell = "h-[20px] border border-[#8a8a8a] bg-[#e6e6e6] flex items-center justify-center text-black shrink-0";

function Tabs({ items, active, label }: { items: string[]; active?: string; label: string }) {
  return (
    <div role="group" aria-label={label} className="flex h-[20px] shrink-0 border border-[#8a8a8a] bg-[#e6e6e6]">
      {items.map((t) => (
        <button key={t} type="button" aria-pressed={t === active} className={`flex w-[19px] items-center justify-center border-r border-[#a8a8a8] last:border-r-0 ${t === active ? "bg-[#4a80c4] text-white" : "text-black"}`}>
          {t}
        </button>
      ))}
    </div>
  );
}

function Drop({ value, label, width }: { value: string; label: string; width: string }) {
  return (
    <div className={`relative h-[20px] shrink-0 border border-[#8a8a8a] bg-white ${width}`}>
      <select aria-label={label} className="h-full w-full appearance-none bg-transparent pl-[3px] text-black outline-none" defaultValue={value}>
        <option>{value}</option>
      </select>
      <span className="pointer-events-none absolute inset-y-0 right-0 flex w-[13px] items-center justify-center border-l border-[#a8a8a8] bg-[#efefef]">
        <svg viewBox="0 0 8 5" className="h-[4px] w-[8px]"><path d="M0 0h8L4 5z" fill="#444" /></svg>
      </span>
    </div>
  );
}

const red = "text-[#e8200c]";

const titleParts = ["[0601]", "주식종합차트", "-", "유통비율[54.2]", "거래대금[135,080(백만)]", "시가총액[1,192(억)]", "주식수[10,410(천)]", "유통수[5,638(천)]", "EPS[775]", "PBR[1.35]", "배당수익률[0]", "PER[14.78]", "ROA[6.4]", "유보율[1,600.6]", "부채비율[47.2]", "영업이익률[11.0]", "외국인보유[151(천)]"];

function TitleBar() {
  return (
    <header className="flex h-[24px] items-center bg-[#3a5690] pr-[6px] pl-[3px] text-[12px] text-white">
      <span className="mr-[5px] flex h-[17px] w-[14px] items-center justify-center rounded-[3px] border border-white bg-[#5a78b8] text-[11px] font-bold">1</span>
      <h1 className="flex gap-[7px] overflow-hidden text-[13px] leading-[22px] whitespace-nowrap">
        {titleParts.map((p) => <span key={p}>{p}</span>)}
      </h1>
      <div className="ml-auto flex shrink-0 items-center gap-[5px] text-[#b4c2e2]">
        <button type="button" aria-label="창 분리"><svg viewBox="0 0 14 12" className="h-[12px] w-[14px]" fill="none" stroke="currentColor" strokeWidth="1.5"><path d="M5 4V1h8v6H9M1 5h8v6H1zM1 6h8" /></svg></button>
        <button type="button" aria-label="내리기"><svg viewBox="0 0 14 12" className="h-[12px] w-[14px]" fill="none" stroke="currentColor"><path d="M1 9.500h12v2H1z" /></svg></button>
        <button type="button" aria-label="복사"><Copy size={14} className="-scale-x-100" /></button>
        <button type="button" aria-label="고정"><Pin size={14} fill="currentColor" /></button>
        <button type="button" aria-label="글꼴" className="font-['Liberation_Serif',serif] text-[17px] leading-none font-bold">T</button>
        <button type="button" aria-label="도움말" className="text-[16px] leading-none font-bold">?</button>
        <span className="mx-[4px] h-[14px] w-px bg-[#8a8a9a]" />
        <button type="button" aria-label="최소화"><svg viewBox="0 0 12 12" className="h-[12px] w-[12px]"><path d="M1 9h10v2H1z" fill="currentColor" /></svg></button>
        <button type="button" aria-label="복원" className="ml-[2px]"><svg viewBox="0 0 12 12" className="h-[12px] w-[12px]" fill="none" stroke="currentColor" strokeWidth="1.5"><path d="M3 4V1h8v6H9M1 5h8v6H1zM1 6h8" /></svg></button>
        <button type="button" aria-label="닫기"><X size={14} /></button>
      </div>
    </header>
  );
}

function Toolbar() {
  return (
    <div className="bg-[#d0d0d0] pt-[5px] pb-[4px] pl-[3px] text-[12px]">
      <div className="flex h-[20px] items-center gap-[2px]">
        <button type="button" aria-label="패널" className={`${cell} w-[20px]`}>
          <svg viewBox="0 0 14 12" className="h-[12px] w-[14px]" fill="none" stroke="#444"><path d="M4.500 1.500h9v9h-9z" fill="#fff" /><path d="M1 2v8l4-4z" fill="#444" /><path d="M4 1h10" strokeWidth="2" /></svg>
        </button>
        <Drop value="주" label="시장" width="w-[31px]" />
        <button type="button" className={`${cell} w-[20px]`}>전</button>
        <div className="flex shrink-0">
          <Drop value="039610" label="종목코드" width="w-[69px]" />
          <button type="button" aria-label="검색" className={`${cell} w-[19px] border-l-0`}><Search size={13} color="#777" /></button>
        </div>
        <button type="button" aria-label="소리" className={`${cell} w-[28px]`}>
          <svg viewBox="0 0 26 12" className="h-[12px] w-[26px]"><path d="M1 4h3l4-3v10l-4-3H1z" fill="#555" /><path d="M10.500 3v6M12.500 4v4" stroke="#777" strokeDasharray="2 1" /><path d="M15.500 0v12" stroke="#999" /><path d="M18 4.500h6l-3 4z" fill="#444" /></svg>
        </button>
        <div className="relative flex h-[20px] w-[81px] shrink-0 items-center border border-[#8a8a8a] bg-white text-[13px] text-[#80004c]">
          <span className="mr-[2px] flex h-full w-[16px] items-center justify-center bg-[#006058] text-white">신</span>화성밸브
          <svg viewBox="0 0 8 8" className="absolute right-0 bottom-0 h-[7px] w-[8px]"><path d="M8 0v8H0z" fill="#a0a0a0" /></svg>
        </div>
        <Tabs label="기간" items={["일", "주", "월", "년"]} />
        <Tabs label="단위" items={["분", "초", "틱"]} active="초" />
        <Tabs label="간격" items={["1", "3", "5", "10", "15", "30", "45", "60"]} active="5" />
        <Drop value="5" label="간격 값" width="w-[38px]" />
        <input aria-label="봉 개수" defaultValue="4374" className="h-[20px] w-[30px] shrink-0 border border-[#8a8a8a] bg-white px-px text-black outline-none" />
        <span className="w-[32px] shrink-0 text-[#555]">/6300</span>
        <div className="flex h-[20px] shrink-0 items-stretch divide-x divide-[#a8a8a8] border border-[#8a8a8a] bg-[#e6e6e6]">
          <button type="button" aria-label="봉 추가" className="flex w-[19px] items-center justify-center"><svg viewBox="0 0 16 16" className="h-[16px] w-[16px]"><path d="M3.500 1v10M9.500 1v8" stroke="#444" /><path d="M1 3h5v6H1z" fill="#444" /><path d="M7 3h5v5H7z" fill="#888" /><path d="M12.500 9v6M9.500 12h6" stroke="#333" strokeWidth="2" /></svg></button>
          <button type="button" aria-label="지표 추가" className="flex w-[19px] items-center justify-center"><svg viewBox="0 0 16 16" className="h-[16px] w-[16px]" fill="none"><path d="M0 7l4-5 4 5 5-5 2 2M1 3l4 4 4-3 5 4" stroke="#888" /><path d="M11.500 9v6M8.500 12h6" stroke="#333" strokeWidth="2" /></svg></button>
          <button type="button" aria-label="저장" className="flex w-[19px] items-center justify-center"><Save size={15} color="#555" /></button>
          <button type="button" aria-label="설정" className="flex w-[19px] items-center justify-center"><Settings size={14} color="#555" strokeWidth={3} /></button>
        </div>
        <label className="flex items-center gap-[3px]">
          <input type="checkbox" className="h-[13px] w-[13px] appearance-none border border-[#888] bg-white" />D
        </label>
      </div>
      <div className="mt-[3px] flex h-[19px] items-stretch gap-[2px]">
        <div className="flex w-[751px] shrink-0 items-center border border-[#8a8a8a] bg-[#f0f0f0] leading-[17px]">
          <span className={`flex w-[73px] items-center justify-end gap-[3px] ${red}`}>11,450<svg viewBox="0 0 10 9" className="h-[9px] w-[10px]"><path d="M5 0l5 9H0z" fill="currentColor" /></svg></span>
          <span className={`w-[47px] text-right ${red}`}>500</span>
          <span className={`w-[52px] border-r border-[#b0b0b0] pr-[2px] text-right whitespace-nowrap ${red}`}>+4.57%</span>
          <span className="w-[69px] text-right">11,559,737</span>
          <span className={`w-[55px] text-right ${red}`}>120.93%</span>
          <span className="w-[46px] border-r border-[#b0b0b0] pr-px text-right whitespace-nowrap">11.04%</span>
          <span className="w-[82px] border-r border-[#b0b0b0] pr-[2px] text-right whitespace-nowrap">135,080백만</span>
          <span className="w-[36px] text-right">최우선</span>
          <span className={`w-[48px] text-right ${red}`}>11,450</span>
          <span className={`w-[55px] border-r border-[#b0b0b0] pr-[5px] text-right ${red}`}>11,440</span>
          <span className="w-[14px] text-right">시</span>
          <span className={`w-[42px] text-right ${red}`}>11,430</span>
          <span className="w-[19px] text-right">고</span>
          <span className={`w-[42px] text-right ${red}`}>12,190</span>
          <span className="w-[19px] text-right">저</span>
          <span className={`w-[42px] text-right ${red}`}>11,130</span>
        </div>
        <button type="button" className="w-[40px] border border-[#8a8a8a] bg-[#f5d0c8] text-[13px] leading-[17px]">매수</button>
        <button type="button" className="w-[40px] border border-[#8a8a8a] bg-[#c4dcf4] text-[13px] leading-[17px]">매도</button>
      </div>
    </div>
  );
}

const tools = [
  "M2 1h10v10H2zM7 7h8v8H7zM11 8v6M8 11h6",
  "M1 2h10v8H1zM5 6h10v8H5zM5 8h10",
  "M1 2h14M1 14h14M1 10l4-3 3 3 6-5",
  "M1 3h14M5 1v14M8 6h5M8 6v5M8 6l6 7",
  "M1 3h14M1 13l4-7 3 5 3-3 3 5",
  "M4 1v14M4 12l4-8 3 6 4-2M1 8h4",
  "M1 14L14 1M2 8l4-5 4 8 5-2",
  "M2 9l6-6h6l-6 6zM2 9v3h6V9M8 12l6-6V3M10 15v-3M13 15v-5",
  "M5 1h10v8H5zM1 6h10v8H1zM2 12l3-3 2 2 3-4",
];

function Footer() {
  const btn = "flex h-[16px] w-[16px] shrink-0 items-center justify-center border border-r-[#707070] border-b-[#707070] border-t-white border-l-white bg-[#efefef]";
  return (
    <footer className="flex h-[17px] items-center bg-[#efefef]">
      <button type="button" aria-label="왼쪽" className={btn}><svg viewBox="0 0 8 8" className="h-[8px] w-[8px]"><path d="M6 0v8L1 4z" /></svg></button>
      <div className="flex h-full flex-1 bg-[#f8f8f8]">
        <div className="w-[30.6%]" />
        <div className="flex-1 border-b-2 border-l border-[#808080] bg-[#efefef]" />
      </div>
      <div className="flex shrink-0 gap-px">
        <button type="button" aria-label="재생" className={btn}><svg viewBox="0 0 8 8" className="h-[8px] w-[8px]"><path d="M2 0v8l4-4z" /></svg></button>
        <button type="button" aria-label="뒤로" className={btn}><svg viewBox="0 0 10 8" className="h-[8px] w-[10px]"><path d="M5 0v8L0 4zM10 0v8L5 4z" /></svg></button>
        <button type="button" aria-label="정지" className={btn}><span className="h-[6px] w-[6px] bg-black" /></button>
        <button type="button" aria-label="앞으로" className={btn}><svg viewBox="0 0 10 8" className="h-[8px] w-[10px]"><path d="M0 0v8l5-4zM5 0v8l5-4z" /></svg></button>
      </div>
      <div className="relative mr-[6px] ml-[5px] h-[17px] w-[70px] shrink-0">
        <svg viewBox="0 0 70 17" className="h-[17px] w-[70px]" shapeRendering="crispEdges">
          <path d="M0 5.500h70" stroke="#888" strokeWidth="2" />
          <path d="M46 2h5v9l-2 2h-1l-2-2z" fill="#f0f0f0" stroke="#888" />
          <path d="M2.500 14v3M9.500 14v3M16.500 14v3M23.500 14v3M30.500 14v3M37.500 14v3M44.500 14v3M51.500 14v3M58.500 14v3M66.500 14v3" stroke="#000" />
        </svg>
        <input type="range" aria-label="확대 비율" defaultValue={70} className="absolute inset-0 w-full opacity-0" />
      </div>
      <div className="flex shrink-0 items-center text-[#666]">
        {tools.map((d, i) => (
          <button key={d} type="button" aria-label={`도구 ${i + 1}`} className={`flex h-[17px] w-[17px] items-center justify-center ${i === 3 ? "bg-white" : ""}`}>
            <svg viewBox="0 0 16 16" className="h-[14px] w-[14px]" fill="none" stroke="currentColor"><path d={d} /></svg>
          </button>
        ))}
        <button type="button" aria-label="돋보기" className="flex w-[17px] justify-center"><Search size={14} /></button>
        <button type="button" aria-label="축소" className="flex w-[17px] justify-center"><Minus size={13} strokeWidth={3} /></button>
        <button type="button" aria-label="확대" className="flex w-[17px] justify-center"><Plus size={14} strokeWidth={3} /></button>
        <button type="button" aria-label="자동" className="w-[17px] text-[14px] leading-none font-bold">A</button>
      </div>
    </footer>
  );
}

export default function App() {
  return (
    <div className={`min-h-screen bg-black p-px ${FONT}`}>
      <TitleBar />
      <main className="mx-[2px] bg-[#e4e8e8] pb-[2px]">
        <Toolbar />
        <div className="px-[3px]">
          <Chart />
          <Footer />
        </div>
      </main>
    </div>
  );
}
